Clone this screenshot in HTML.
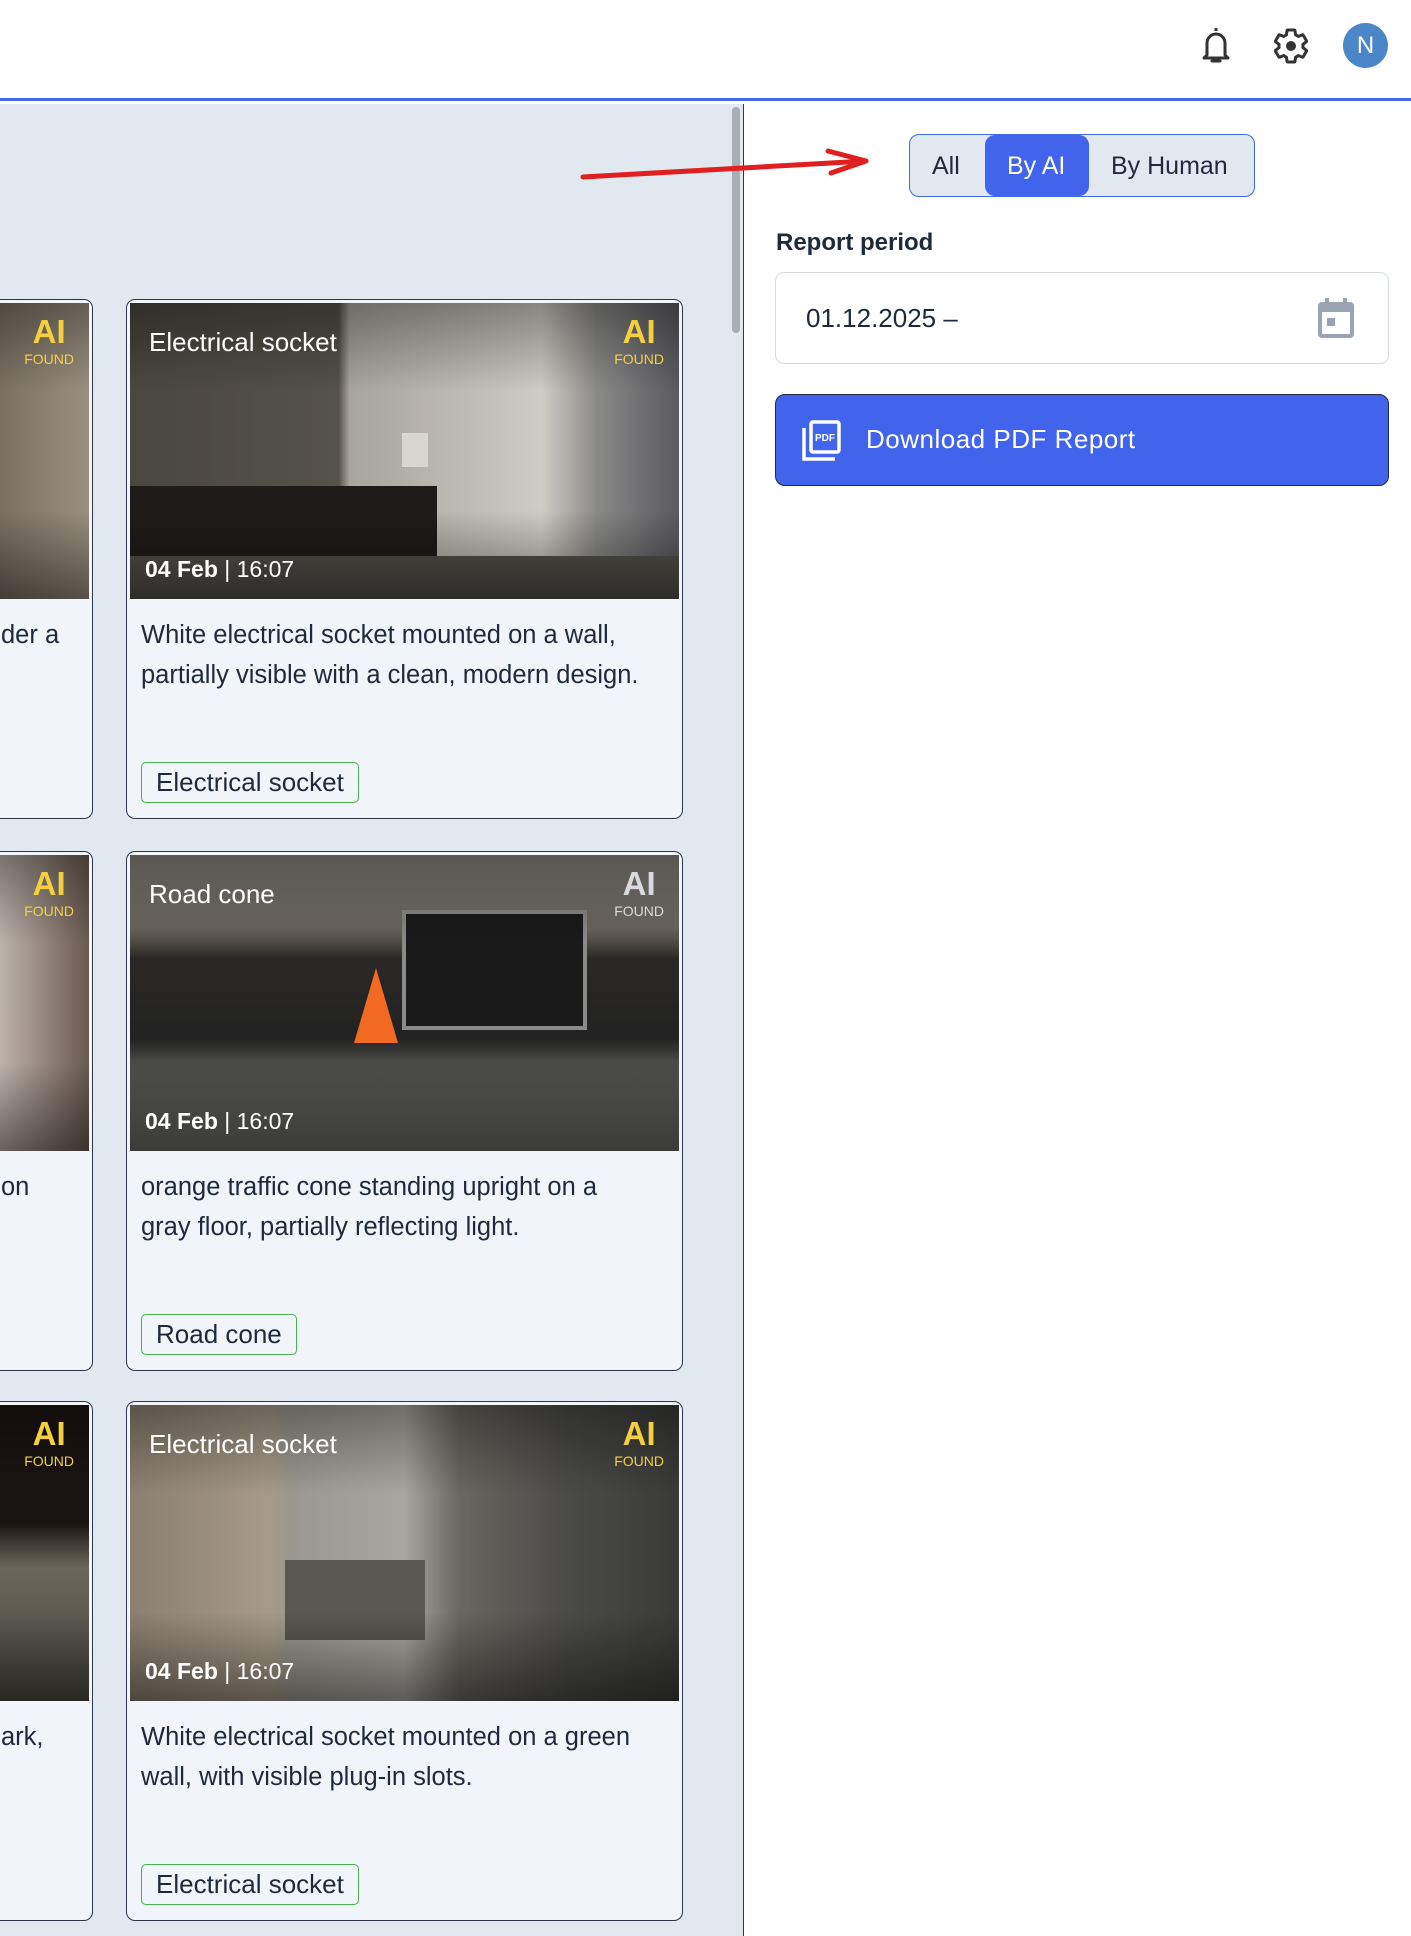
<!DOCTYPE html>
<html><head><meta charset="utf-8"><style>
*{box-sizing:border-box;margin:0;padding:0}
body{width:1411px;height:1936px;overflow:hidden;background:#fff;font-family:"Liberation Sans",Arial,sans-serif;position:relative;color:#1e293b}
.hdr{position:absolute;left:0;top:0;width:1411px;height:101px;background:#fff;border-bottom:3px solid #4169e1}
.left{position:absolute;left:0;top:104px;width:744px;height:1832px;background:#e2e8f0;overflow:hidden;border-right:1.5px solid #2d3748}
.sb{position:absolute;left:732px;top:3px;width:8px;height:226px;background:#a9adb5;border-radius:4px}
.card{position:absolute;width:557px;height:520px;background:#f1f5f9;border:1.5px solid #2d3748;border-radius:9px;overflow:hidden}
.img{position:absolute;left:3px;top:3px;right:3px;height:296px;overflow:hidden}
.img .sh{position:absolute;inset:0;background:linear-gradient(rgba(0,0,0,.35),rgba(0,0,0,0) 30%,rgba(0,0,0,0) 70%,rgba(0,0,0,.45))}
.ttl{position:absolute;left:19px;top:24px;color:#fff;font-size:26px}
.ai{position:absolute;right:15px;top:12px;text-align:center;color:#f4d03f;line-height:1}
.ai b{display:block;font-size:33px}
.ai span{display:block;font-size:14px;margin-top:4px}
.dt{position:absolute;left:15px;bottom:16px;color:#fff;font-size:23px}
.desc{position:absolute;left:14px;top:315px;width:540px;font-size:25.5px;line-height:40px;color:#1e293b;white-space:nowrap}
.tag{position:absolute;left:14px;top:462px;height:41px;border:1.5px solid #4caf50;border-radius:5px;padding:0 14px;font-size:26px;line-height:38px;color:#1e293b}
</style></head><body>
<div class="hdr">
 <svg style="position:absolute;left:1198px;top:24px" width="36" height="42" viewBox="0 0 36 42"><path d="M18 4v3M9 31V19a9 9 0 0 1 18 0v12l3 3H6z" fill="none" stroke="#333" stroke-width="3" stroke-linejoin="round"/><path d="M14 37h8" stroke="#333" stroke-width="3" stroke-linecap="round"/></svg>
 <svg style="position:absolute;left:1271px;top:26px" width="40" height="40" viewBox="0 0 24 24"><path fill="none" stroke="#333" stroke-width="1.8" stroke-linejoin="round" d="M19.14 12.94c.04-.3.06-.61.06-.94s-.02-.64-.07-.94l2.03-1.58a.49.49 0 0 0 .12-.61l-1.92-3.32a.49.49 0 0 0-.59-.22l-2.39.96c-.5-.38-1.03-.7-1.62-.94l-.36-2.54a.48.48 0 0 0-.48-.41h-3.84a.48.48 0 0 0-.47.41l-.36 2.54c-.59.24-1.130.57-1.62.94l-2.39-.96a.49.49 0 0 0-.59.22L2.74 8.87c-.12.21-.08.47.12.61l2.03 1.58c-.05.3-.09.63-.09.94s.02.64.07.94l-2.03 1.58a.49.49 0 0 0-.12.61l1.92 3.32c.12.22.37.29.59.22l2.39-.96c.5.38 1.03.7 1.62.94l.36 2.54c.05.24.24.41.48.41h3.84c.24 0 .44-.17.47-.41l.36-2.54c.59-.24 1.13-.56 1.62-.94l2.39.96c.22.08.47 0 .59-.22l1.92-3.32c.12-.22.07-.47-.12-.61z"/><circle cx="12" cy="12" r="3" fill="#333"/></svg>
 <div style="position:absolute;left:1343px;top:23px;width:45px;height:45px;border-radius:50%;background:#4a86c8;color:#fff;font-size:24px;line-height:45px;text-align:center">N</div>
</div>
<div class="left">
 <div class="sb"></div>
 <div class="card" style="left:-464px;top:195px">
  <div class="img" style="background:linear-gradient(90deg,#6b6358,#8a8070 40%,#4a4236 60%,#9a9080);"><div class="sh"></div><div class="ai"><b>AI</b><span>FOUND</span></div></div>
  <div class="desc" style="left:464px;width:200px">der a</div>
 </div>
 <div class="card" style="left:126px;top:195px">
  <div class="img" style="background:linear-gradient(90deg,#4a4740 0%,#55524a 38%,#a8a59c 40%,#bdbab2 60%,#cfccc4 75%,#8a8a88 85%,#5a5a60 100%)"><div style="position:absolute;left:0;top:183px;width:307px;height:70px;background:#1e1c1a"></div><div style="position:absolute;left:0;top:253px;width:100%;height:43px;background:#55524c"></div><div style="position:absolute;left:272px;top:130px;width:26px;height:34px;background:#d8d6cf"></div><div class="sh"></div><div class="ttl">Electrical socket</div><div class="ai"><b>AI</b><span>FOUND</span></div><div class="dt"><b>04 Feb</b> | 16:07</div></div>
  <div class="desc">White electrical socket mounted on a wall,<br>partially visible with a clean, modern design.</div>
  <div class="tag">Electrical socket</div>
 </div>
 <div class="card" style="left:-464px;top:747px">
  <div class="img" style="background:linear-gradient(90deg,#5a4a40,#2a2420 50%,#d0c8c0 80%,#6a5a50)"><div class="sh"></div><div class="ai"><b>AI</b><span>FOUND</span></div></div>
  <div class="desc" style="left:464px;width:200px">on</div>
 </div>
 <div class="card" style="left:126px;top:747px">
  <div class="img" style="background:linear-gradient(180deg,#8a8680 0%,#6a665e 25%,#2a2826 35%,#222 62%,#4a4a48 70%,#6a6a68 100%)"><div style="position:absolute;left:224px;top:113px;width:0;height:0;border-left:22px solid transparent;border-right:22px solid transparent;border-bottom:75px solid #f26a22"></div><div style="position:absolute;left:272px;top:55px;width:185px;height:120px;background:#1a1a1a;border:4px solid #8a8a88"></div><div class="sh"></div><div class="ttl">Road cone</div><div class="ai" style="color:#d8dae0"><b>AI</b><span>FOUND</span></div><div class="dt"><b>04 Feb</b> | 16:07</div></div>
  <div class="desc">orange traffic cone standing upright on a<br>gray floor, partially reflecting light.</div>
  <div class="tag">Road cone</div>
 </div>
 <div class="card" style="left:-464px;top:1297px">
  <div class="img" style="background:linear-gradient(180deg,#1a1412 0%,#1a1412 40%,#6a665a 55%,#4a4840 100%)"><div class="sh"></div><div class="ai"><b>AI</b><span>FOUND</span></div></div>
  <div class="desc" style="left:464px;width:200px">ark,</div>
 </div>
 <div class="card" style="left:126px;top:1297px">
  <div class="img" style="background:linear-gradient(90deg,#8a8070 0%,#a59a88 25%,#9a9890 30%,#a8a6a0 50%,#6a6660 60%,#4a4a48 80%,#3a3a38 100%)"><div style="position:absolute;left:155px;top:155px;width:140px;height:80px;background:#5a5650"></div><div class="sh"></div><div class="ttl">Electrical socket</div><div class="ai"><b>AI</b><span>FOUND</span></div><div class="dt"><b>04 Feb</b> | 16:07</div></div>
  <div class="desc">White electrical socket mounted on a green<br>wall, with visible plug-in slots.</div>
  <div class="tag">Electrical socket</div>
 </div>
</div>
<svg style="position:absolute;left:0;top:0" width="900" height="220"><path d="M583 177 L866 161" stroke="#e02020" stroke-width="5" stroke-linecap="round"/><path d="M828 151 L866 161 L831 173" fill="none" stroke="#e02020" stroke-width="5" stroke-linecap="round" stroke-linejoin="round"/></svg>
<div style="position:absolute;left:909px;top:134px;width:346px;height:63px;border:1.5px solid #4169e1;border-radius:10px;background:#e2e8f0"></div>
<div style="position:absolute;left:985px;top:135px;width:104px;height:61px;border-radius:10px;background:#4263eb"></div>
<div style="position:absolute;left:932px;top:152px;font-size:25px;color:#1e293b">All</div>
<div style="position:absolute;left:1007px;top:152px;font-size:25px;color:#fff">By AI</div>
<div style="position:absolute;left:1111px;top:152px;font-size:25px;color:#1e293b">By Human</div>
<div style="position:absolute;left:776px;top:229px;font-size:24px;font-weight:bold;color:#1e293b">Report period</div>
<div style="position:absolute;left:775px;top:272px;width:614px;height:92px;border:1.5px solid #d5dae2;border-radius:9px;background:#fff"></div>
<div style="position:absolute;left:806px;top:303px;font-size:26px;color:#1e293b">01.12.2025 –</div>
<svg style="position:absolute;left:1318px;top:296px" width="36" height="42" viewBox="0 0 36 42"><rect x="2" y="8" width="32" height="32" rx="2" fill="none" stroke="#9aa3b2" stroke-width="4"/><rect x="2" y="8" width="32" height="8" fill="#9aa3b2"/><rect x="7" y="2" width="4" height="8" fill="#9aa3b2"/><rect x="25" y="2" width="4" height="8" fill="#9aa3b2"/><rect x="9" y="22" width="8" height="8" fill="#9aa3b2"/></svg>
<div style="position:absolute;left:775px;top:394px;width:614px;height:92px;border:1.5px solid #1e2a44;border-radius:10px;background:#4263eb"></div>
<svg style="position:absolute;left:801px;top:420px" width="42" height="42" viewBox="0 0 42 42"><path d="M3 8v31h31" fill="none" stroke="#fff" stroke-width="3.5"/><rect x="10" y="2" width="28" height="30" rx="2" fill="none" stroke="#fff" stroke-width="3.5"/><text x="24" y="21" fill="#fff" font-size="10" font-weight="bold" text-anchor="middle" font-family="Liberation Sans">PDF</text></svg>
<div style="position:absolute;left:866px;top:424px;font-size:26px;color:#fff;letter-spacing:.5px">Download PDF Report</div>
</body></html>
